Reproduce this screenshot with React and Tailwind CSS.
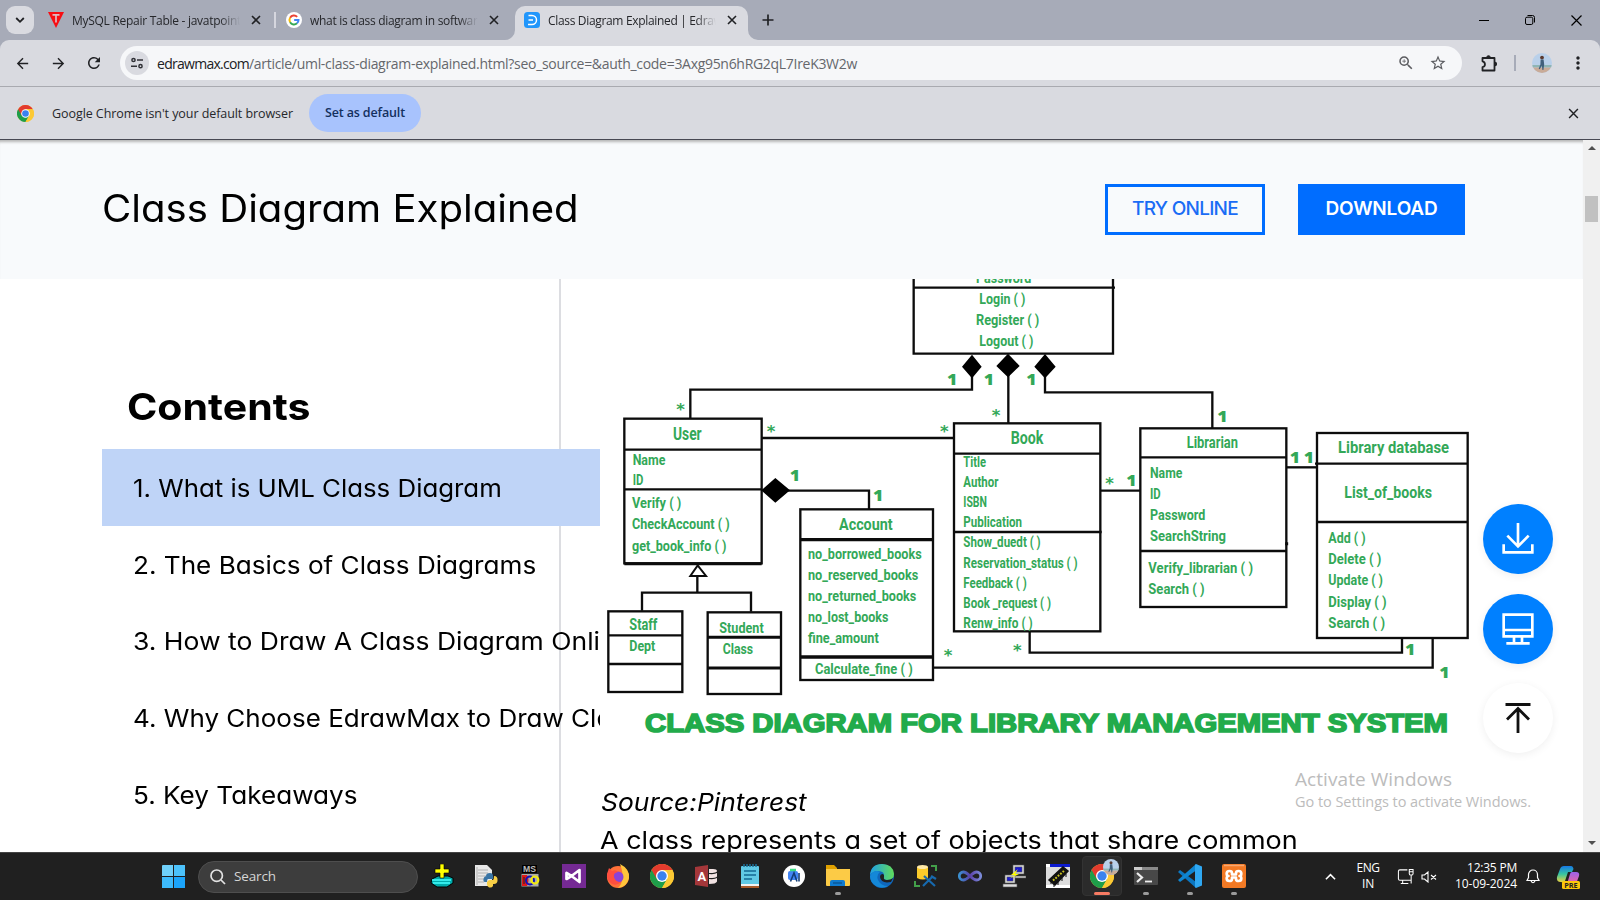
import React, { useLayoutEffect, useRef, useState } from "react";
import { MdArrowBack, MdArrowForward, MdRefresh, MdStarBorder, MdZoomIn, MdMoreVert } from "react-icons/md";

const UI = "font-['Open_Sans','Noto_Sans',sans-serif]";
const GEO = "font-[Inter,sans-serif] [font-feature-settings:'cv11']";

/* Text whose letter spacing is tuned so that `children` spans `w` pixels. */
function Fit({ w, children, className = "" }) {
  const ref = useRef(null);
  const [ls, setLs] = useState(0);
  useLayoutEffect(() => {
    const el = ref.current;
    el.style.letterSpacing = "0px";
    const natural = el.getBoundingClientRect().width;
    setLs((w - natural) / String(children).length);
  }, [w, children]);
  return (
    <span className={"whitespace-pre " + className}>
      <span ref={ref} style={{ letterSpacing: ls + "px" }}>{children}</span>
    </span>
  );
}

/* Text whose glyphs are widened so that `children` spans `w` pixels. */
function Wide({ w, children, rest = "" }) {
  const ref = useRef(null);
  const [k, setK] = useState(1);
  useLayoutEffect(() => {
    setK(w / ref.current.offsetWidth);
  }, [w, children]);
  return (
    <span className="inline-block origin-left whitespace-pre" style={{ transform: `scaleX(${k})` }}>
      <span ref={ref}>{children}</span>{rest}
    </span>
  );
}

function ChromeLogo({ className }) {
  return (
    <svg viewBox="0 0 48 48" className={className}>
      <circle cx="24" cy="24" r="24" fill="#fcc934" />
      <path d="M24 24 L3.2 12 A24 24 0 0 0 24 48 L34.4 30 Z" fill="#1e9e4a" />
      <path d="M24 12 H44.8 A24 24 0 0 0 3.2 12 L13.6 30 Z" fill="#e33b2e" />
      <path d="M34.4 30 L24 48 A24 24 0 0 0 44.8 12 H24 Z" fill="#fcc934" />
      <circle cx="24" cy="24" r="12" fill="#fff" />
      <circle cx="24" cy="24" r="9.4" fill="#3b82ee" />
    </svg>
  );
}

function Cross({ className = "size-[10px]", sw = 1.6 }) {
  return (
    <svg viewBox="0 0 10 10" className={className} fill="none" stroke="#202124" strokeWidth={sw}>
      <path d="M1 1 L9 9 M9 1 L1 9" />
    </svg>
  );
}

function Avatar({ className }) {
  return (
    <svg viewBox="0 0 20 20" className={className}>
      <defs><clipPath id="av"><circle cx="10" cy="10" r="10" /></clipPath></defs>
      <g clipPath="url(#av)">
        <rect width="20" height="20" fill="#b9d0ea" />
        <rect y="12" width="20" height="2.5" fill="#8fb5b5" />
        <rect y="14.5" width="20" height="6" fill="#c9ab98" />
        <circle cx="10" cy="4.6" r="1.9" fill="#5a3a30" />
        <path d="M8.6 6.5 h3 l.6 5 -.8 5.5 h-1 l-.5 -4.500 -2.200 3.800 -1 -.6 1.700 -4.200z" fill="#41607c" />
      </g>
    </svg>
  );
}

function Tab({ icon, title, w }) {
  return (
    <div className="flex h-[28px] items-center">
      <div className="size-4">{icon}</div>
      <div className="ml-2 w-[168px] overflow-hidden pt-[2px] text-[12px] leading-5 text-[#26272b] [mask-image:linear-gradient(to_right,black_88%,transparent)]">
        <Fit w={w}>{title}</Fit>
      </div>
      <Cross className="ml-[11px] size-[10px]" />
    </div>
  );
}

function TabStrip() {
  return (
    <div className="flex h-10 bg-[#a7abb8]">
      <div className="ml-[6px] mt-[6px] flex size-7 items-center justify-center rounded-[9px] bg-[#d9dae0]">
        <svg viewBox="0 0 10 10" className="size-[10px]" fill="none" stroke="#202124" strokeWidth="1.8"><path d="M1.200 3 L5 6.800 L8.800 3" /></svg>
      </div>
      <div className="ml-[14px] mt-[6px]">
        <Tab w={169} title="MySQL Repair Table - javatpoint" icon={
          <svg viewBox="0 0 16 16"><path d="M0 0 H16 L8 16 Z" fill="#f80d12" /><path d="M4.500 2.800 H11.500 M8 2.800 V10.500" stroke="#e0b9c2" strokeWidth="1.700" fill="none" /></svg>
        } />
      </div>
      <div className="ml-[13px] mt-3 h-4 w-[2px] bg-[#d5d6de]" />
      <div className="ml-[10px] mt-[6px]">
        <Tab w={174} title="what is class diagram in software" icon={
          <svg viewBox="0 0 48 48"><circle cx="24" cy="24" r="24" fill="#fff" /><g fill="none" strokeWidth="6">
            <path d="M33.500 14.500 A13.500 13.500 0 0 0 12.300 17.200" stroke="#ea4335" />
            <path d="M12.300 17.200 A13.500 13.500 0 0 0 12.300 30.800" stroke="#fbbc05" />
            <path d="M12.300 30.800 A13.500 13.500 0 0 0 33 34" stroke="#34a853" />
            <path d="M33 34 A13.500 13.500 0 0 0 37.500 24 H24.500" stroke="#4285f4" /></g></svg>
        } />
      </div>
      <div className="ml-[6px] flex h-10 items-end">
        <svg viewBox="0 0 10 10" className="size-[10px]"><path d="M10 0 V10 H0 A10 10 0 0 0 10 0Z" fill="#d9dae0" /></svg>
        <div className="h-[34px] w-[233px] rounded-t-[10px] bg-[#d9dae0] pl-[9px]">
          <Tab w={185} title="Class Diagram Explained | EdrawM" icon={
            <svg viewBox="0 0 16 16"><rect width="16" height="16" rx="3.500" fill="#2196fb" /><path d="M4.500 3.500 H8 A4.500 4.500 0 0 1 8 12.500 H4 M4.500 8 H9" stroke="#fff" strokeWidth="1.500" fill="none" /></svg>
          } />
        </div>
        <svg viewBox="0 0 10 10" className="size-[10px]"><path d="M0 0 V10 H10 A10 10 0 0 1 0 0Z" fill="#d9dae0" /></svg>
      </div>
      <svg viewBox="0 0 12 12" className="ml-1 mt-[14px] size-3" stroke="#202124" strokeWidth="1.700"><path d="M6 .5 V11.500 M.5 6 H11.500" /></svg>
      <div className="ml-auto mr-[18px] flex h-10 items-center gap-9 text-black">
        <svg viewBox="0 0 10 10" className="size-[10px]" stroke="currentColor"><path d="M0 5.500 H10" /></svg>
        <svg viewBox="0 0 10 10" className="size-[10px]" fill="none" stroke="currentColor" strokeWidth="1"><rect x=".5" y="2.200" width="7.300" height="7.300" rx="1.500" /><path d="M2.500 .5 H7.500 A2 2 0 0 1 9.500 2.500 V7.500" /></svg>
        <svg viewBox="0 0 11 11" className="size-[11px]" fill="none" stroke="currentColor" strokeWidth="1.200"><path d="M.5 .5 L10.500 10.500 M10.500 .5 L.5 10.500" /></svg>
      </div>
    </div>
  );
}

function Toolbar() {
  return (
    <div className="bg-[#a7abb8]">
      <div className="flex h-[47px] items-center rounded-t-[9px] border-b border-[#a9aab0] bg-[#d9dae0] pl-[14px] text-[#202124]">
        <MdArrowBack className="size-[17px]" />
        <MdArrowForward className="ml-[19px] size-[17px]" />
        <MdRefresh className="ml-[18px] size-[18px]" />
        <div className="ml-[17px] flex h-[34px] w-[1342px] items-center rounded-full bg-[#f6f7f9] pl-[5px]">
          <div className="flex size-6 items-center justify-center rounded-full bg-[#d9dae0]">
            <svg viewBox="0 0 12 12" className="size-3" fill="none" stroke="#303136" strokeWidth="1.500"><circle cx="2.500" cy="3" r="1.600" /><path d="M6 3 H12 M0 9.200 H6" /><circle cx="9.500" cy="9.200" r="1.600" /></svg>
          </div>
          <div className="ml-2 pt-px text-[14px] leading-5 text-[#65676c]">
            <Fit w={92} className="text-[#202124]">edrawmax.com</Fit>
            <Fit w={608}>/article/uml-class-diagram-explained.html?seo_source=&auth_code=3Axg95n6hRG2qL7IreK3W2w</Fit>
          </div>
          <MdZoomIn className="ml-auto size-[18px] text-[#5b5c60]" />
          <MdStarBorder className="ml-[14px] mr-[15px] size-[18px] text-[#5b5c60]" />
        </div>
        <svg viewBox="0 0 16 17" className="ml-[19px] h-[17px] w-4" fill="none" stroke="#202124" strokeWidth="1.800"><path d="M1.500 3 H13.500 V15.500 H1.500 V12.200 A3 3 0 0 0 1.500 6.300 Z" strokeLinejoin="round" /><path d="M5.700 2.500 A1.800 1.800 0 0 1 9.300 2.500Z M14 7.200 A1.800 1.800 0 0 1 14 10.800Z" fill="#202124" strokeWidth="1" /></svg>
        <div className="ml-[17px] h-4 w-[2px] bg-[#a7abb8]" />
        <Avatar className="ml-4 size-5" />
        <MdMoreVert className="ml-[16px] size-5" />
      </div>
    </div>
  );
}

function InfoBar() {
  return (
    <div className="flex h-[53px] items-center border-b border-[#474853] bg-[#d9dae0] pl-[17px]">
      <ChromeLogo className="size-[17px]" />
      <div className="ml-[18px] w-[257px] pt-[2px] text-[12.500px] text-[#26272b]"><Fit w={241}>Google Chrome isn't your default browser</Fit></div>
      <div className="flex h-[38px] w-[112px] items-center justify-center rounded-full bg-[#a8c3fd] pt-px text-[12.500px] font-semibold text-[#14305f]"><Fit w={80}>Set as default</Fit></div>
      <Cross className="ml-auto mr-[21px] size-[11px]" sw={1.3} />
    </div>
  );
}

function T({ x, y, w, s = 40, children }) {
  return <text x={x} y={y} fontSize={s} textLength={w} lengthAdjust="spacingAndGlyphs">{children}</text>;
}

const labels = [
  ["Password", 1128, 41, 166], ["Login ( )", 1138, 103, 138], ["Register ( )", 1128, 165, 190], ["Logout ( )", 1138, 229, 162],
  ["User", 219, 512, 86, 47], ["Name", 98, 585, 98], ["ID", 98, 647, 32], ["Verify ( )", 96, 715, 148], ["CheckAccount ( )", 96, 779, 293], ["get_book_info ( )", 96, 843, 283],
  ["Account", 717, 782, 161, 46], ["no_borrowed_books", 624, 867, 341], ["no_reserved_books", 624, 930, 331], ["no_returned_books", 624, 993, 325], ["no_lost_books", 624, 1057, 241], ["fine_amount", 624, 1119, 212], ["Calculate_fine ( )", 645, 1212, 293],
  ["Staff", 88, 1082, 84, 43], ["Dept", 88, 1145, 78], ["Student", 358, 1090, 133], ["Class", 368, 1154, 91],
  ["Book", 1232, 523, 98, 48], ["Title", 1090, 591, 68, 38], ["Author", 1090, 651, 105, 38], ["ISBN", 1090, 711, 71, 38], ["Publication", 1090, 772, 176, 38],
  ["Show_duedt ( )", 1090, 833, 232, 38], ["Reservation_status ( )", 1090, 894, 343, 38], ["Feedback ( )", 1090, 954, 190, 38], ["Book _request ( )", 1090, 1015, 263, 38], ["Renw_info ( )", 1090, 1075, 208, 38],
  ["Librarian", 1760, 534, 154, 42], ["Name", 1650, 626, 97], ["ID", 1650, 688, 32], ["Password", 1650, 752, 166], ["SearchString", 1650, 815, 228], ["Verify_librarian ( )", 1645, 911, 314], ["Search ( )", 1645, 974, 169],
  ["Library database", 2214, 550, 333, 46], ["List_of_books", 2233, 685, 263, 46],
  ["Add ( )", 2185, 821, 112], ["Delete ( )", 2185, 884, 159], ["Update ( )", 2185, 947, 164], ["Display ( )", 2185, 1011, 175], ["Search ( )", 2185, 1074, 170],
];
const ones = [[1042, 346], [1152, 346], [1280, 346], [570, 633], [820, 692], [1853, 455], [1580, 649], [2070, 578], [2112, 578], [2416, 1154], [2519, 1225]];
const stars = [[230, 434], [501, 501], [1021, 501], [1176, 453], [1517, 656], [1240, 1158], [1032, 1173]];

function Diagram() {
  return (
    <svg viewBox="0 27 2640 1383" className="block h-[461px] w-[880px]">
      <g fill="none" stroke="#0c0c0c" strokeWidth="7">
        <path d="M941 0 V251 H1539 V0 M941 53 H1545" />
        <path d="M1116 300 V359 H271 V446 M1225 300 V460 M1335 300 V367 H1837 V475" />
        <rect x="73" y="446" width="412" height="434" /><path d="M73 539 H485 M73 658 H485" />
        <path d="M485 504 H1062 M560 662 H807 V718" />
        <path d="M292 918 V968 M126 1022 V968 H453 V1025" />
        <rect x="25" y="1024" width="222" height="242" /><path d="M25 1096 H247 M25 1182 H247" />
        <rect x="323" y="1027" width="220" height="245" /><path d="M323 1102 H543 M323 1194 H543" strokeWidth="9" />
        <rect x="601" y="718" width="398" height="512" /><path d="M601 809 H999 M601 1161 H999" strokeWidth="10" />
        <rect x="1062" y="460" width="439" height="624" /><path d="M1062 551 H1501 M1062 786 H1505" />
        <path d="M1501 662 H1620" />
        <rect x="1621" y="475" width="438" height="536" /><path d="M1621 562 H2059 M1621 843 H2059" />
        <path d="M2059 592 H2151" />
        <rect x="2151" y="489" width="452" height="615" /><path d="M2145 581 H2603 M2151 756 H2603" />
        <path d="M1289 1084 V1148 H2406 V1104 M1000 1193 H2498 V1104" />
        <path d="M73 881 H485 M2060 817 V826" strokeWidth="9" />
      </g>
      <g fill="#000">
        <path d="M1116 254 L1145 290 L1116 325 L1086 290Z M1224 251 L1259 288 L1224 322 L1189 288Z M1335 252 L1367 290 L1335 325 L1303 290Z M484 661 L526 624 L570 661 L526 698Z" />
      </g>
      <path d="M293 886 L318 918 H271Z" fill="#fff" stroke="#0c0c0c" strokeWidth="6" />
      <g fill="#33a858" fontFamily="Roboto, sans-serif" fontWeight="700">
        {labels.map(([t, x, y, w, s = 40], i) => <T key={i} x={x} y={y - 1} w={w} s={s * 1.13}>{t}</T>)}
      </g>
      <g fill="#33a858" fontFamily="'Open Sans', sans-serif" fontWeight="800">
        {ones.map(([x, y], i) => <T key={i} x={x - 1} y={y} w={31} s={45}>1</T>)}
      </g>
      <g fill="#33a858" fontFamily="'DejaVu Sans', sans-serif" fontWeight="700">
        {stars.map(([x, y], i) => <T key={i} x={x - 1} y={y} w={26} s={46}>*</T>)}
      </g>
      <text x="135" y="1386" fontSize="77" textLength="2409" lengthAdjust="spacingAndGlyphs" fontFamily="'Liberation Sans', Arial, sans-serif" fontWeight="700" fill="#22ab4b" stroke="#22ab4b" strokeWidth="5">CLASS DIAGRAM FOR LIBRARY MANAGEMENT SYSTEM</text>
    </svg>
  );
}

function NavItem({ w, text, rest, active }) {
  return (
    <div className={"flex h-[76.700px] w-[498px] shrink-0 items-center overflow-hidden pl-[31px] pt-[2px] text-[24.500px] " + (active ? "bg-[#bfd4f7]" : "")}>
      <Wide w={w} rest={rest}>{text}</Wide>
    </div>
  );
}

function Page() {
  return (
    <div className="relative flex h-[712px] bg-white">
      <div className={"w-[1583px] overflow-hidden text-black " + GEO}>
        <header className="flex h-[139px] items-start bg-[#f8fafc] pl-[102px] shadow-[inset_0_4px_3px_-2px_#b5b5b5]">
          <h1 className="w-[1003px] pt-[42px] text-[37.500px] leading-[54px]"><Wide w={477}>Class Diagram Explained</Wide></h1>
          <div className="mt-[44px] flex h-[51px] w-[160px] items-center justify-center border-3 border-[#006dff] text-[19px] font-medium text-[#1a6cf5]"><Fit w={106}>TRY ONLINE</Fit></div>
          <div className="ml-[33px] mt-[44px] flex h-[51px] w-[167px] items-center justify-center bg-[#006dff] text-[19px] font-semibold text-white"><Fit w={112}>DOWNLOAD</Fit></div>
        </header>
        <div className="flex h-[573px]">
          <aside className="h-full w-[561px] shrink-0 border-r-2 border-[#dcdde1] pl-[102px]">
            <h2 className="pb-[14px] pl-[25px] pt-[100px] text-[37px] font-bold leading-[56px]"><Wide w={183}>Contents</Wide></h2>
            <div className="relative w-[498px]">
              <NavItem active w={369} text="1. What is UML Class Diagram" />
              <NavItem w={403} text="2. The Basics of Class Diagrams" />
              <NavItem w={467} text="3. How to Draw A Class Diagram Onli" rest="ne" />
              <NavItem w={463} text="4. Why Choose EdrawMax to Draw Cl" rest="ass" />
              <NavItem w={225} text="5. Key Takeaways" />
            </div>
          </aside>
          <main className="ml-[39px] w-[983px] shrink-0">
            <Diagram />
            <p className="mt-[43px] pl-px text-[24.500px] italic leading-[38px]"><Wide w={206}>Source:Pinterest</Wide></p>
            <p className="text-[24.500px] leading-[38px]"><Wide w={698}>A class represents a set of objects that share common</Wide></p>
          </main>
        </div>
      </div>
      <div className="flex w-[17px] flex-col items-center bg-[#f0f0f0] pt-[6px]">
        <svg viewBox="0 0 8 4" className="h-1 w-[8px]"><path d="M0 4 L4 0 L8 4Z" fill="#505050" /></svg>
        <div className="mt-[46px] h-[26px] w-[13px] bg-[#c1c1c1]" />
        <svg viewBox="0 0 8 4" className="mb-[7px] mt-auto h-1 w-[8px]"><path d="M0 0 L4 4 L8 0Z" fill="#505050" /></svg>
      </div>

      <div className="absolute left-[1483px] top-[364px] flex flex-col gap-[19.500px]">
        <div className="flex size-[70px] items-center justify-center rounded-full bg-[#0080ff] shadow-[0_2px_8px_#0001]">
          <svg viewBox="0 0 96 96" className="size-8" fill="none" stroke="#fff" strokeWidth="8"><path d="M48 0 V70 M16 38 L48 70 L80 38 M5 64 V88 H91 V64" /></svg>
        </div>
        <div className="flex size-[70px] items-center justify-center rounded-full bg-[#0080ff] shadow-[0_2px_8px_#0001]">
          <svg viewBox="0 0 96 96" className="size-8" fill="none" stroke="#fff" strokeWidth="8"><path d="M5 5 H91 V70 H5Z M5 51 H91 M36 70 V90 M60 70 V90 M13 91 H83" /></svg>
        </div>
        <div className="flex size-[70px] items-center justify-center rounded-full bg-white shadow-[0_2px_9px_#00000010]">
          <svg viewBox="0 0 30 32" className="h-8 w-[30px]" fill="none" stroke="#111" strokeWidth="2.800"><path d="M2.500 2.500 H27.500 M15 7 V31 M4 17.500 L15 6.500 L26 17.500" /></svg>
        </div>
      </div>
      <div className={"absolute left-[1295px] top-[625px] flex flex-col text-[#bcbcbc] " + UI}>
        <div className="text-[19px] leading-[28px]"><Fit w={157}>Activate Windows</Fit></div>
        <div className="text-[14.500px] leading-[18px]"><Fit w={236}>Go to Settings to activate Windows.</Fit></div>
      </div>
    </div>
  );
}

const icons = [
  <svg viewBox="0 0 24 24"><path d="M2 15 L8 12 H18 L23 14 V19 L17 23 H7 L1 19Z" fill="#0aa" stroke="#000" /><path d="M2 16 H21 M3 19 H20" stroke="#4ff" strokeWidth="1.500" /><path d="M10 0 H14 V5 H19 V9 H14 V14 H10 V9 H5 V5 H10Z" fill="#ff0" stroke="#000" strokeWidth=".6" /></svg>,
  <svg viewBox="0 0 24 24"><path d="M1 1 H13 L18 6 V22 H1Z" fill="#e8e8e8" /><path d="M3 3 V21 M4 6 H14 M4 9 H14 M4 12 H12 M4 15 H10 M4 18 H10" stroke="#b0b0b0" /><path d="M12 12 Q12 9 16 9 Q19 9 19 12 V15 H14 Q13 15 13 18 H11 Q9 18 9.500 15 Q10 12 13 12Z" fill="#3873a4" /><path d="M20 12 Q24 12 23.500 17 Q23 20 20 20 H19 V22 Q18 24 15 23.500 Q13 23 13 20 V18 Q14 16 16 16 H19 Q20 15 20 12Z" fill="#f8cf46" /></svg>,
  <svg viewBox="0 0 24 24"><rect x="4" y="1" width="15" height="8" fill="#000" /><text x="5" y="8" fontSize="9" fontWeight="700" textLength="13" lengthAdjust="spacingAndGlyphs" fill="#bbb" fontFamily="Liberation Sans, sans-serif">MS</text><rect x="3.500" y="10" width="17" height="12.500" fill="#aaa" /><path d="M4 11 H9 Q12 16 9 22 H4Z" fill="#e01818" /><path d="M6 13 V20" stroke="#222" /><circle cx="12" cy="16.500" r="4" fill="none" stroke="#11b" strokeWidth="2" /><circle cx="16.800" cy="16" r="3.500" fill="none" stroke="#f2ea10" strokeWidth="2.200" /></svg>,
  <svg viewBox="0 0 24 24"><rect width="24" height="24" fill="#752a94" /><path d="M4.500 9 V15 L9.500 12 Z M9.500 12 L17.500 18 V6 Z" fill="none" stroke="#fff" strokeWidth="2.700" strokeLinejoin="round" /></svg>,
  <svg viewBox="0 0 24 24"><circle cx="12" cy="13" r="11" fill="#ff7139" /><path d="M14 0 Q24 5 23 14 Q21 23 12 24 Q20 16 14 0Z" fill="#ffc53a" /><circle cx="12" cy="13" r="5.500" fill="#8a42d8" /><path d="M1 10 L3 4 L6 7 Q10 5 12 8 Q7 9 8 13 Q9 18 15 18 Q11 22 6 20 Q0 16 1 10Z" fill="#ff4f3f" /></svg>,
  <ChromeLogo />,
  <svg viewBox="0 0 24 24"><path d="M1 3 L14 1 V23 L1 21Z" fill="#a4373a" /><path d="M15 5 H19 Q23 5 23 7 Q23 9 15 9Z M15 10 Q21 10.500 23 9 V12.500 Q22 14 15 14Z M15 15 Q21 15.500 23 14 V17.500 Q22 20 15 20Z" fill="#f2e3e3" /><text x="3.500" y="17" fontSize="13" fontWeight="700" fill="#fff" fontFamily="Roboto, sans-serif">A</text></svg>,
  <svg viewBox="0 0 24 24"><rect x="3" y="2" width="18" height="20" rx="1" fill="#61c9e5" /><rect x="3" y="21" width="18" height="3" fill="#a85a2a" /><rect x="3" y="20" width="18" height="2" fill="#f2f2f2" /><path d="M6 0 V3 M9 0 V3 M12 0 V3 M15 0 V3 M18 0 V3" stroke="#1b6f98" strokeWidth="1.500" /><path d="M6 7 H18 M6 11 H18 M6 15 H14" stroke="#146a94" strokeWidth="1.500" /></svg>,
  <svg viewBox="0 0 24 24"><circle cx="12" cy="12" r="11" fill="#fff" /><rect x="6" y="7" width="10" height="9" rx="2" fill="#4285f4" /><path d="M8 6 H14" stroke="#3ddc84" strokeWidth="2.500" /><path d="M8.500 17.500 L12 9 L15 17.500 M17 9 V17.500" stroke="#123d75" strokeWidth="1.600" fill="none" /></svg>,
  <svg viewBox="0 0 24 24"><path d="M0 1 H8 L11 4 V8 H0Z" fill="#e0a100" /><path d="M0 5 H24 V21 Q24 22 23 22 H1 Q0 22 0 21Z" fill="#fccb46" /><path d="M4 22 V18 Q4 16 6 16 H17 Q19 16 19 18 V22Z" fill="#0f7bd0" /><path d="M7 19 H16" stroke="#0a5798" strokeWidth="1.500" /></svg>,
  <svg viewBox="0 0 24 24"><defs><linearGradient id="edg" x1="0" x2="1"><stop stopColor="#1f9fe8" /><stop offset="1" stopColor="#61dc58" /></linearGradient></defs><circle cx="12" cy="12" r="12" fill="#0f66bb" /><path d="M0 11 Q1 0 12 0 Q23 0 24 10 Q24 16 17 16 Q13 16 14 13 Q15 7 8 7 Q3 7 0 11Z" fill="url(#edg)" /><path d="M14 13 Q13 16 17 16 Q21 16 23 14 L21 18 Q11 20 10 13 Q10 10 13 10 Q14.500 11 14 13Z" fill="#202020" /><path d="M0 12 Q4 5 10 8 Q6 11 8 16 Q11 22 18 22 Q12 25 6 22 Q0 18 0 12Z" fill="#1488d8" /></svg>,
  <svg viewBox="0 0 24 24"><path d="M3 3 V14 Q9 17 14 14 V3Z" fill="#fbcb2a" /><ellipse cx="8.500" cy="3" rx="5.500" ry="2" fill="#ffe9a8" /><path d="M17 2 H22 V7 M1 17 V22 H6" fill="none" stroke="#43a04a" strokeWidth="2" /><path d="M9 22 L19 12 M10 12 L21 22 M17 12 L22 15" stroke="#1769ae" strokeWidth="2.200" /></svg>,
  <svg viewBox="0 0 24 24"><defs><linearGradient id="vsi" x1="0" x2="1"><stop stopColor="#3b8fd0" /><stop offset=".5" stopColor="#5b40a8" /><stop offset="1" stopColor="#7b8ad8" /></linearGradient></defs><path d="M12 12 Q8 8 5.300 8 A4 4 0 0 0 5.300 16 Q8 16 12 12 Q16 8 18.700 8 A4 4 0 0 1 18.700 16 Q16 16 12 12Z" fill="none" stroke="url(#vsi)" strokeWidth="2.800" /></svg>,
  <svg viewBox="0 0 24 24"><g stroke="#555" strokeWidth=".6"><rect x="11" y="1" width="11" height="9" fill="#ddd" /><rect x="13" y="3" width="7" height="5" fill="#1818d0" /><path d="M10 12 H24 V14 H10Z" fill="#ccc" /><rect x="3" y="11" width="10" height="8" fill="#ddd" /><rect x="5" y="13" width="6" height="4" fill="#1818d0" /><path d="M1 20 H15 V23 H1Z" fill="#ddd" /></g><path d="M16 5 L9 11 H13 L7 15 L17 10 H13Z" fill="#ff0" /></svg>,
  <svg viewBox="0 0 24 24"><rect width="24" height="24" fill="#ddd" /><path d="M0 0 H24 V3 H0Z" fill="#0c1bd0" /><path d="M0 0 H4 V3 H0Z M0 21 H24 V24 H0Z" fill="#fff" /><path d="M3 16 L17 3 L22 7 L9 21Z" fill="#111" stroke="#111" strokeWidth="1.500" /><path d="M5 17 V20 M8 20 V23 M12 18 V21 M16 14 V17 M20 10 V13" stroke="#111" /><path d="M7 16.500 L19 6" stroke="#c8c020" strokeWidth="2" strokeDasharray="1.800 1.400" /></svg>,
];

function TaskIcon({ children, mark }) {
  return (
    <div className="flex h-[40px] w-[44px] flex-col items-center pt-[8px]">
      <div className="size-6">{children}</div>
      <div className={"mt-[4px] h-[3px] w-[6px] rounded-full " + (mark ? "bg-[#9b9b9b]" : "")} />
    </div>
  );
}

function Taskbar() {
  return (
    <div className="flex h-12 items-center border-t border-[#444] bg-[#202020] pl-[162px] text-white">
      <div className="grid size-[23px] grid-cols-2 gap-px">
        <div className="rounded-tl-[1px] bg-[#6fd0fa]" /><div className="bg-[#4cc2fb]" /><div className="bg-[#3dbafb]" /><div className="bg-[#1ba4fb]" />
      </div>
      <div className="ml-[13px] flex h-8 w-[220px] items-center rounded-full border border-[#4e4e4e] bg-[#3d3d3d] pl-[11px] text-[14px] text-[#d5d5d5]">
        <svg viewBox="0 0 16 16" className="size-4" fill="none" stroke="#e2e2e2" strokeWidth="1.700"><circle cx="6.700" cy="6.700" r="5.700" /><path d="M11 11 L15 15" /></svg>
        <div className="ml-[8px] pb-px text-[13.500px]"><Fit w={42}>Search</Fit></div>
      </div>
      <div className="-mt-px ml-[2px] flex">
        {icons.map((ic, i) => <TaskIcon key={i} mark={i === 9}>{ic}</TaskIcon>)}
        <div className="flex h-[40px] w-[44px] justify-center">
          <div className="flex w-10 flex-col items-center rounded-[4px] border border-[#333] bg-[#2b2b2b] pt-[7px]">
            <div className="relative size-6"><ChromeLogo /><Avatar className="absolute -top-[5px] left-[13px] size-4" /></div>
            <div className="mt-[4px] h-[3px] w-4 rounded-full bg-[#f77b63]" />
          </div>
        </div>
        <TaskIcon mark><svg viewBox="0 0 24 24"><rect y="3" width="24" height="18" rx="1" fill="#484848" /><path d="M0 3 H24 V6 H0Z" fill="#8a8a8a" /><path d="M0 3 H8 V6 H0Z" fill="#ccc" /><path d="M3 9 L8 13.500 L3 18" fill="none" stroke="#eee" strokeWidth="2.200" /><path d="M11 17.500 H18" stroke="#eee" strokeWidth="1.800" /></svg></TaskIcon>
        <TaskIcon mark><svg viewBox="0 0 24 24"><path d="M0 8 L2 6 L18 18 V24 Z" fill="#0b77c2" /><path d="M0 16 L2 18 L18 6.500 V0Z" fill="#0f86d2" /><path d="M18 0 L24 2.500 V21.500 L18 24 L17 23 V1Z" fill="#2fa8f2" /></svg></TaskIcon>
        <TaskIcon mark><svg viewBox="0 0 24 24"><rect width="24" height="24" rx="2" fill="#f37a25" /><path d="M2 1.500 H22" stroke="#f7a76f" strokeWidth="1.500" /><g fill="none" stroke="#fff" strokeWidth="2.700" strokeLinejoin="round"><path d="M12 10.500 H10 V9 Q10 7 7.500 7 Q4.700 7 4.700 9.500 Q4.700 12 6.500 12 Q4.700 12 4.700 14.500 Q4.700 17 7.500 17 Q10 17 10 15 V13.500 H12" /><path d="M12 10.500 H14 V9 Q14 7 16.500 7 Q19.300 7 19.300 9.500 Q19.300 12 17.500 12 Q19.300 12 19.300 14.500 Q19.300 17 16.500 17 Q14 17 14 15 V13.500 H12" /></g></svg></TaskIcon>
      </div>
      <svg viewBox="0 0 12 8" className="ml-auto h-2 w-[11px]" fill="none" stroke="#fff" strokeWidth="1.700"><path d="M1 6.500 L6 1.500 L11 6.500" /></svg>
      <div className="ml-[20px] flex w-6 flex-col items-center pb-px text-[12px] leading-4"><Fit w={23}>ENG</Fit><Fit w={12}>IN</Fit></div>
      <svg viewBox="0 0 18 18" className="ml-[17px] size-[17px]" fill="none" stroke="#fff" strokeWidth="1.100"><path d="M11 2 H3 Q1.500 2 1.500 3.500 V11.500 Q1.500 13 3 13 H15 V9 M6 13 V16.500 M4 16.500 H12 M13 1.500 H17 V6 Q17 7.500 15 7.500 Q13 7.500 13 6 Z M13 4 H17 M15 8 V16.500" /></svg>
      <svg viewBox="0 0 16 12" className="ml-[7px] h-3 w-4" fill="none" stroke="#fff" strokeWidth="1.100"><path d="M1 4 H3.500 L7 1 V11 L3.500 8 H1Z M10 4 L15 8.500 M15 4 L10 8.500" /></svg>
      <div className="ml-[17px] flex w-[63px] flex-col items-end pb-[2px] text-[12px] leading-4"><Fit w={50}>12:35 PM</Fit><Fit w={62}>10-09-2024</Fit></div>
      <svg viewBox="0 0 14 15" className="ml-[9px] h-[15px] w-[14px]" fill="none" stroke="#fff" strokeWidth="1.200"><path d="M1 11.500 L2.500 8.500 V5.500 A4.500 4.500 0 0 1 11.500 5.500 V8.500 L13 11.500Z M5 12 Q7 15.500 9 12" /></svg>
      <div className="ml-[16px] mr-[20px] size-6">
        <svg viewBox="0 0 24 24"><defs><linearGradient id="cp1" x2="0" y2="1"><stop stopColor="#1679e6" /><stop offset=".5" stopColor="#38c5a0" /><stop offset="1" stopColor="#efd13c" /></linearGradient><linearGradient id="cp2" x2="0" y2="1"><stop stopColor="#9b62ea" /><stop offset="1" stopColor="#f2669b" /></linearGradient></defs>
          <path d="M8 1 H15 Q17 1 17.500 4 L16 7 H12 L9 16 Q8 18 5 17 Q0 17 1 12 L4 4 Q5 1 8 1Z" fill="url(#cp1)" /><path d="M16 7 H20 Q24 7 23 11 L20 19 H11 L14 9 Q14.500 7 16 7Z" fill="url(#cp2)" />
          <rect x="6" y="16" width="18" height="8" rx="1.500" fill="#fcc60a" /><text x="8.200" y="22.500" fontSize="6.800" fontWeight="700" fill="#222" textLength="13.500" lengthAdjust="spacingAndGlyphs" fontFamily="Open Sans, sans-serif">PRE</text></svg>
      </div>
    </div>
  );
}

export default function App() {
  return (
    <div className={"flex h-[900px] w-[1600px] flex-col overflow-hidden " + UI}>
      <TabStrip />
      <Toolbar />
      <InfoBar />
      <Page />
      <Taskbar />
    </div>
  );
}
